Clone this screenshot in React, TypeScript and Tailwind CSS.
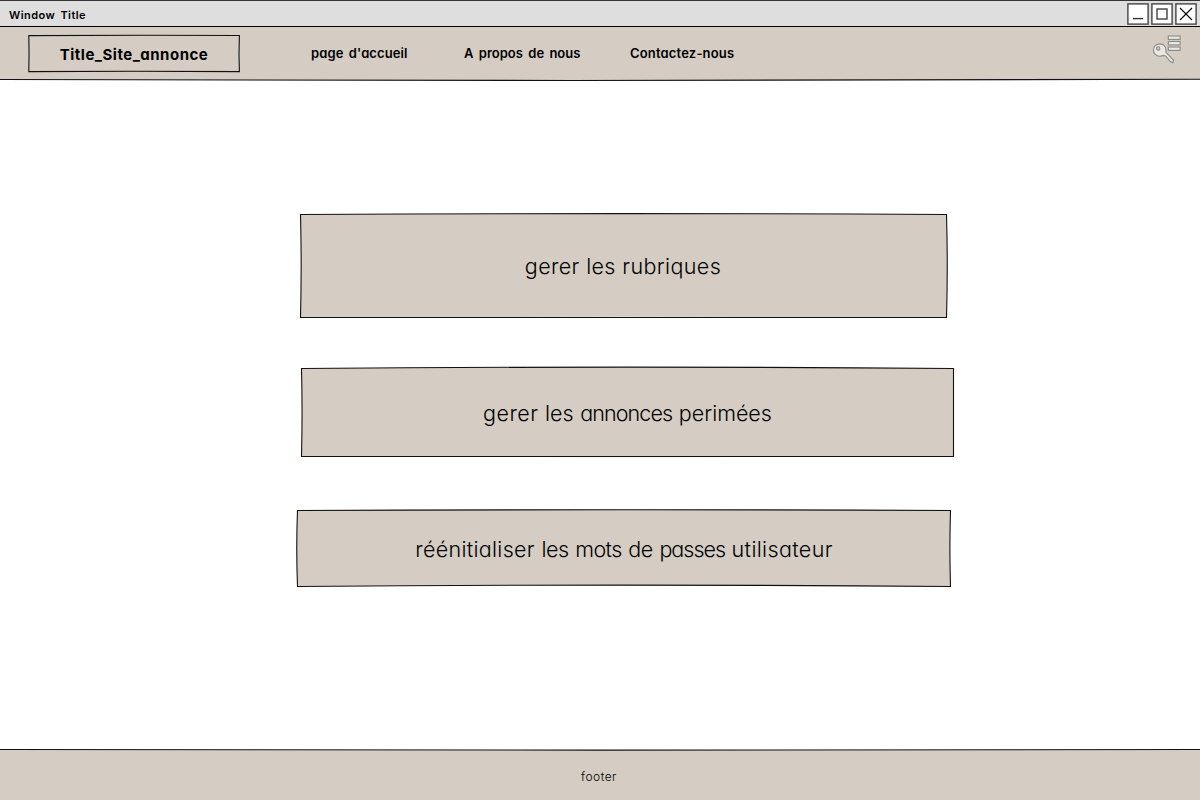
import React from "react";

type SketchProps = { width: number; height: number; d: string; fill?: string };

function Sketch({ width, height, d, fill = "#d5cdc3" }: SketchProps) {
  return (
    <svg
      className="pointer-events-none absolute inset-0 overflow-visible"
      width={width}
      height={height}
      aria-hidden="true"
    >
      <path d={d} fill={fill} stroke="#111" strokeWidth="1.1" />
    </svg>
  );
}

function WindowButton({ children }: { children: React.ReactNode }) {
  return (
    <button className="h-[22px] w-[22px]">
      <svg width="22" height="22" viewBox="0 0 22 22" fill="none" stroke="#333">
        <rect x="0.9" y="0.9" width="20.2" height="20.2" fill="#fff" stroke="#444" strokeWidth="1.4" />
        {children}
      </svg>
    </button>
  );
}

function KeyIcon() {
  return (
    <svg width="30" height="30" viewBox="0 0 30 30" fill="#e9e8e4" stroke="#8b8983" strokeWidth="1.1">
      <rect x="16.3" y="1" width="11.8" height="3.4" />
      <rect x="16.3" y="6.5" width="11.8" height="3.4" />
      <rect x="16.3" y="12" width="11.8" height="3.4" />
      <path d="M10.8 20.4 L13.6 20.9 L18.4 26.6 L20.8 27.8 L21.5 25.2 L13.9 17.4 L14 15 C14 11.4 11.2 8.9 7.8 8.9 C4.2 8.9 1.4 11.6 1.4 15 C1.4 18.6 4.2 21.2 7.6 21.2 C8.8 21.2 9.9 20.9 10.8 20.4 Z" />
      <circle cx="6.2" cy="13.5" r="1.7" fill="#d5cdc3" />
    </svg>
  );
}

export default function App() {
  return (
    <div className="flex h-[800px] w-[1200px] flex-col overflow-hidden bg-white font-['Comic_Sans_MS','Inter',sans-serif] text-black [font-feature-settings:'cv11','ss03']">
      <div className="flex h-[27px] shrink-0 items-center justify-between border-t border-b border-t-[#333] border-b-black bg-[#dedede] pr-[3px] pl-[9px]">
        <span className="pt-[3px] text-[11px] leading-4 font-semibold tracking-[0.45px] whitespace-nowrap [word-spacing:2px]">
          Window Title
        </span>
        <div className="flex gap-[2px] pt-px">
          <WindowButton>
            <path d="M6 15.6H16" strokeWidth="1.4" />
          </WindowButton>
          <WindowButton>
            <rect x="6" y="6" width="10" height="10" strokeWidth="1.3" />
          </WindowButton>
          <WindowButton>
            <path d="M5 5L17 17M17 5L5 17" stroke="#000" strokeWidth="1.1" />
          </WindowButton>
        </div>
      </div>

      <header className="relative h-[53px] shrink-0">
        <Sketch width={1200} height={53} d="M-2 0V52.5Q600 54.5 1202 52.3V0" />
        <div className="relative flex h-full items-start pl-[28px]">
          <div className="relative mt-[8px] flex h-[38px] w-[212px] shrink-0 items-center justify-center">
            <Sketch width={212} height={38} d="M.8 .6Q106 0 211.4 .5Q210.6 19 211.4 36.6Q106 36 .8 36.6Q1.3 18 .8 .6Z" />
            <span className="relative pt-[2px] text-[15px] leading-5 font-bold tracking-[0.5px] whitespace-nowrap">
              Title_Site_annonce
            </span>
          </div>
          <nav className="flex pt-[16px] pl-[71px] text-[13px] leading-5 font-semibold whitespace-nowrap [word-spacing:2px]">
            <a className="w-[153px] tracking-[0.1px]">page d'accueil</a>
            <a className="w-[166px] tracking-[0.02px]">A propos de nous</a>
            <a className="tracking-[0.17px]">Contactez-nous</a>
          </nav>
          <div className="mt-[8px] mr-[18px] ml-auto">
            <KeyIcon />
          </div>
        </div>
      </header>

      <main className="flex flex-1 flex-col pt-[134px] pl-[297px] text-[21.5px] leading-7">
        <button className="relative ml-[3px] flex h-[104px] w-[647px] items-center justify-center">
          <Sketch width={647} height={104} d="M.5 .5Q323 -1.2 646.5 .5Q648 52 646.5 103.5Q323 102.2 .5 103.5Q1.8 52 .5 .5Z" />
          <span className="relative pr-px font-light tracking-[0.38px] whitespace-nowrap">gerer les rubriques</span>
        </button>
        <button className="relative mt-[50px] ml-[4px] flex h-[89px] w-[653px] items-center justify-center">
          <Sketch width={653} height={89} d="M.5 .5Q326 -2.2 652.5 .5V88.5Q326 89.8 .5 88.5Q1.6 44 .5 .5Z" />
          <span className="relative font-light tracking-[0.5px] whitespace-nowrap">
            gerer <span className="tracking-[0px]">les</span> <span className="tracking-[-0.9px]">annonces</span>{" "}
            <span className="tracking-[0px]">perimées</span>
          </span>
        </button>
        <button className="relative mt-[53px] flex h-[77px] w-[654px] items-center justify-center">
          <Sketch width={654} height={77} d="M.5 .5Q327 -1 653.5 .5Q652.3 38 653.5 76.5Q327 73.8 .5 76.5Q-1 38 .5 .5Z" />
          <span className="relative font-light tracking-[0.5px] whitespace-nowrap">
            <span className="tracking-[0.3px]">réénitialiser</span> <span className="tracking-[-0.4px]">les</span>{" "}
            <span className="tracking-[-0.6px]">mots</span> <span className="tracking-[-0.4px]">de</span>{" "}
            <span className="tracking-[-1px]">passes</span> <span className="tracking-[0.35px]">utilisateur</span>
          </span>
        </button>
      </main>

      <footer className="relative h-[51px] shrink-0">
        <Sketch width={1200} height={51} d="M-2 .5Q600 1.7 1202 .5V53H-2Z" />
        <div className="relative pt-[18px] pr-[2px] text-center text-[12px] leading-5 font-light tracking-[0.5px]">footer</div>
      </footer>
    </div>
  );
}
